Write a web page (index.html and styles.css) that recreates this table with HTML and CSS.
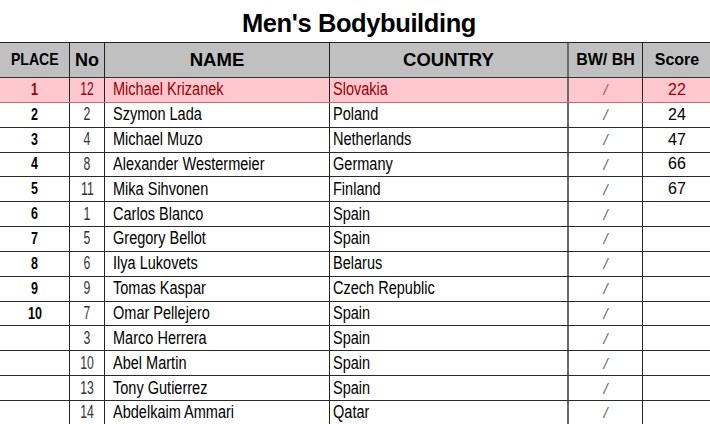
FILE: index.html
```html
<!DOCTYPE html>
<html>
<head>
<meta charset="utf-8">
<link rel="stylesheet" href="styles.css">
</head>
<body>
<h1 class="title">Men's Bodybuilding</h1>
<div class="table">
  <div class="row head">
    <div class="c place"><span>PLACE</span></div>
    <div class="c no">No</div>
    <div class="c name">NAME</div>
    <div class="c country">COUNTRY</div>
    <div class="c bw">BW/ BH</div>
    <div class="c score">Score</div>
  </div>
  <div class="row hl">
    <div class="c place"><span>1</span></div><div class="c no"><span>12</span></div><div class="c name"><span>Michael Krizanek</span></div><div class="c country"><span>Slovakia</span></div><div class="c bw">/</div><div class="c score">22</div>
  </div>
  <div class="row">
    <div class="c place"><span>2</span></div><div class="c no"><span>2</span></div><div class="c name"><span>Szymon Lada</span></div><div class="c country"><span>Poland</span></div><div class="c bw">/</div><div class="c score">24</div>
  </div>
  <div class="row">
    <div class="c place"><span>3</span></div><div class="c no"><span>4</span></div><div class="c name"><span>Michael Muzo</span></div><div class="c country"><span>Netherlands</span></div><div class="c bw">/</div><div class="c score">47</div>
  </div>
  <div class="row">
    <div class="c place"><span>4</span></div><div class="c no"><span>8</span></div><div class="c name"><span>Alexander Westermeier</span></div><div class="c country"><span>Germany</span></div><div class="c bw">/</div><div class="c score">66</div>
  </div>
  <div class="row">
    <div class="c place"><span>5</span></div><div class="c no"><span>11</span></div><div class="c name"><span>Mika Sihvonen</span></div><div class="c country"><span>Finland</span></div><div class="c bw">/</div><div class="c score">67</div>
  </div>
  <div class="row">
    <div class="c place"><span>6</span></div><div class="c no"><span>1</span></div><div class="c name"><span>Carlos Blanco</span></div><div class="c country"><span>Spain</span></div><div class="c bw">/</div><div class="c score"></div>
  </div>
  <div class="row">
    <div class="c place"><span>7</span></div><div class="c no"><span>5</span></div><div class="c name"><span>Gregory Bellot</span></div><div class="c country"><span>Spain</span></div><div class="c bw">/</div><div class="c score"></div>
  </div>
  <div class="row">
    <div class="c place"><span>8</span></div><div class="c no"><span>6</span></div><div class="c name"><span>Ilya Lukovets</span></div><div class="c country"><span>Belarus</span></div><div class="c bw">/</div><div class="c score"></div>
  </div>
  <div class="row">
    <div class="c place"><span>9</span></div><div class="c no"><span>9</span></div><div class="c name"><span>Tomas Kaspar</span></div><div class="c country"><span>Czech Republic</span></div><div class="c bw">/</div><div class="c score"></div>
  </div>
  <div class="row">
    <div class="c place"><span>10</span></div><div class="c no"><span>7</span></div><div class="c name"><span>Omar Pellejero</span></div><div class="c country"><span>Spain</span></div><div class="c bw">/</div><div class="c score"></div>
  </div>
  <div class="row">
    <div class="c place"></div><div class="c no"><span>3</span></div><div class="c name"><span>Marco Herrera</span></div><div class="c country"><span>Spain</span></div><div class="c bw">/</div><div class="c score"></div>
  </div>
  <div class="row">
    <div class="c place"></div><div class="c no"><span>10</span></div><div class="c name"><span>Abel Martin</span></div><div class="c country"><span>Spain</span></div><div class="c bw">/</div><div class="c score"></div>
  </div>
  <div class="row">
    <div class="c place"></div><div class="c no"><span>13</span></div><div class="c name"><span>Tony Gutierrez</span></div><div class="c country"><span>Spain</span></div><div class="c bw">/</div><div class="c score"></div>
  </div>
  <div class="row">
    <div class="c place"></div><div class="c no"><span>14</span></div><div class="c name"><span>Abdelkaim Ammari</span></div><div class="c country"><span>Qatar</span></div><div class="c bw">/</div><div class="c score"></div>
  </div>
</div>
</body>
</html>
```

FILE: styles.css
```css
html, body {
  margin: 0;
  padding: 0;
  background: #fff;
  overflow: hidden;
}
body {
  width: 710px;
  height: 424px;
  font-family: "Liberation Sans", Arial, sans-serif;
  color: #000;
}
.title {
  margin: 0;
  box-sizing: border-box;
  height: 42px;
  padding: 4px 0 0 8px;
  line-height: 38px;
  text-align: center;
  font-weight: bold;
  font-size: 25.5px;
  letter-spacing: -0.4px;
}
.table {
  border-top: 1px solid #222;
  width: 712px;
}
.row {
  display: grid;
  grid-template-columns: 70px 35px 225px 239px 74px 69px;
  height: 24.85px;
  box-sizing: border-box;
  border-bottom: 1px solid #2a2a2a;
}
.c {
  box-sizing: border-box;
  border-right: 1px solid #222;
  display: flex;
  align-items: center;
  white-space: nowrap;
  overflow: hidden;
  font-size: 17.5px;
}
.c > span {
  display: inline-block;
  transform: scaleX(0.83);
  transform-origin: left center;
}
.c.country {
  border-right: 2px solid #6a6a6a;
}
.place {
  justify-content: center;
  font-weight: bold;
  font-size: 16px;
}
.place > span {
  transform: scaleX(0.78);
  transform-origin: center center;
}
.no {
  justify-content: center;
  font-size: 18px;
  color: #333;
}
.no > span {
  transform: scaleX(0.68);
  transform-origin: center center;
}
.name {
  padding-left: 8px;
}
.country {
  padding-left: 3px;
}
.bw {
  justify-content: center;
  color: #666;
  font-size: 15px;
  font-style: italic;
}
.score {
  justify-content: center;
  font-size: 16px;
}
.row.head {
  height: 35px;
  background: #c0c0c0;
  border-bottom: 1px solid #333;
}
.head .c {
  font-weight: bold;
  color: #000;
  justify-content: center;
  padding-left: 0;
  font-style: normal;
}
.head .place {
  font-size: 17px;
}
.head .place > span {
  transform: scaleX(0.83);
}
.head .no {
  font-size: 18px;
}
.head .name, .head .country {
  font-size: 18.5px;
}
.head .bw, .head .score {
  font-size: 16px;
}
.row.hl {
  background: #ffc7ce;
  border-bottom-color: #c86a6a;
}
.hl .c {
  color: #9c0006;
}
.hl .bw {
  color: #b0505a;
}
```
